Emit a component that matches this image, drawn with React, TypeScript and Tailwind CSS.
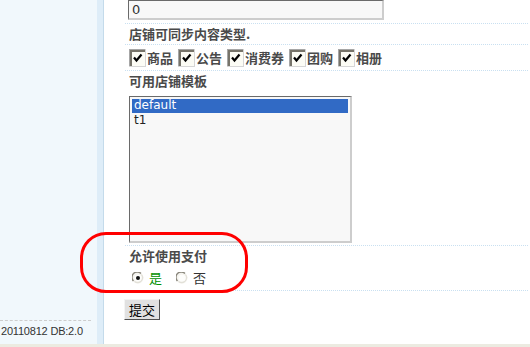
import React from "react";

const CJK = "font-['Noto_Sans_CJK_SC','Noto_Sans',sans-serif]";

const OPTIONS = ["商品", "公告", "消费券", "团购", "相册"];

function CheckBox() {
  return (
    <svg width="17" height="18" viewBox="0 0 17 18" className="shrink-0">
      <rect x="0" y="0" width="17" height="18" fill="#d6d6d6" />
      <rect x="0" y="0" width="16" height="1" fill="#a6a6a6" />
      <rect x="0" y="0" width="1" height="17" fill="#a6a6a6" />
      <rect x="1" y="1" width="15" height="16" fill="#fcfcf5" />
      <rect x="1" y="1" width="15" height="2" fill="#77746a" />
      <rect x="1" y="1" width="2" height="16" fill="#77746a" />
      <polyline points="5,8.5 7.5,11.5 12.5,5.5" fill="none" stroke="#000" strokeWidth="2.2" />
    </svg>
  );
}

function Radio({ checked }: { checked?: boolean }) {
  return (
    <svg width="12" height="12" viewBox="0 0 12 12" className="shrink-0">
      <circle cx="6" cy="6" r="5.5" fill="#f4f3ee" />
      <path d="M1.5 9 A5 5 0 0 1 9 1.5" fill="none" stroke="#8a877c" strokeWidth="1.4" />
      <path d="M9.5 2.5 A5 5 0 0 1 2.5 9.5" fill="none" stroke="#e2e0d8" strokeWidth="1.2" />
      <circle cx="6" cy="6" r="3.6" fill="#fdfdfb" />
      {checked && <circle cx="6" cy="6" r="2" fill="#111" />}
    </svg>
  );
}

export default function App() {
  return (
    <div className="relative w-[530px] h-[347px] overflow-hidden bg-white flex flex-col">
      <div className="flex flex-1 min-h-0">
        {/* Sidebar */}
        <aside className="flex shrink-0 w-[104px]">
          <div className="w-[97px] bg-[#f1f8fc] flex flex-col justify-end pb-[3px]">
            <div className="border-t border-dashed border-[#cdcdcd] mr-[6px]" />
            <div className="h-[20px] flex items-center text-[11px] text-[#333] font-['Liberation_Sans',sans-serif] tracking-[-0.2px] pl-px">
              20110812 DB:2.0
            </div>
          </div>
          <div className="w-[6px] bg-[#deedf8]" />
          <div className="w-px bg-[#c4dbeb]" />
        </aside>

        {/* Main form */}
        <main className={`flex-1 pl-[21px] pr-[2px] ${CJK}`}>
          <div className="h-[24px] border-b border-dotted border-[#c9e0f1] pl-[3px]">
            <div className="w-[256px] h-[20px] bg-[#f8f8f8] border-t border-l border-t-[#6a6a6a] border-l-[#6a6a6a] border-r-2 border-b-2 border-r-[#cdcdcd] border-b-[#cdcdcd] flex items-center pl-[3px] text-[13px] text-[#333] font-['DejaVu_Sans',sans-serif]">
              0
            </div>
          </div>

          <div className="h-[21px] border-b border-dotted border-[#c9e0f1] pl-[4px] flex items-center text-[13px] font-bold text-[#4a4a4a]">
            店铺可同步内容类型.
          </div>

          <div className="h-[26px] border-b border-dotted border-[#c9e0f1] pl-[4px] flex items-center gap-[5px] text-[13px] font-bold text-[#4a4a4a]">
            {OPTIONS.map((o) => (
              <label key={o} className="flex items-center gap-px">
                <CheckBox />
                <span>{o}</span>
              </label>
            ))}
          </div>

          <div className="h-[175px] border-b border-dotted border-[#c9e0f1] pl-[4px] flex flex-col">
            <div className="h-[20px] flex items-center text-[13px] font-bold text-[#4a4a4a]">可用店铺模板</div>
            <div className="mt-[5px] w-[223px] h-[147px] bg-[#f8f8f8] border-t border-l border-[#6a6a6a] border-r-2 border-b-2 border-r-[#cdcdcd] border-b-[#cdcdcd] p-[2px] font-['DejaVu_Sans',sans-serif] text-[12px] leading-[13px]">
              <div className="bg-[#316ac5] text-white pl-[2px] h-[14px]">default</div>
              <div className="text-[#222] pl-[2px] h-[14px] pt-px">t1</div>
            </div>
          </div>

          <div className="h-[45px] border-b border-dotted border-[#c9e0f1] pl-[4px] flex flex-col">
            <div className="h-[20px] flex items-center text-[13px] font-bold text-[#4a4a4a]">允许使用支付</div>
            <div className="h-[24px] flex items-center pl-[3px] text-[13px]">
              <Radio checked />
              <span className="ml-[5px] text-[#009000]">是</span>
              <span className="ml-[14px]"><Radio /></span>
              <span className="ml-[5px] text-[#333]">否</span>
            </div>
          </div>

          <button className="ml-[-1px] mt-[8px] w-[36px] h-[21px] bg-[#e1e1e1] border border-t-[#f4f4f4] border-l-[#f4f4f4] border-r-[#505050] border-b-[#505050] text-[13px] text-black flex items-center justify-center leading-none">
            提交
          </button>
        </main>
      </div>
      <div className="h-[3px] bg-[#ecebe1]" />

      {/* Red annotation outline */}
      <div className="absolute left-[80px] top-[232px] w-[168px] h-[61px] border-[3px] border-[#ff0000] rounded-[26px]" />
    </div>
  );
}
